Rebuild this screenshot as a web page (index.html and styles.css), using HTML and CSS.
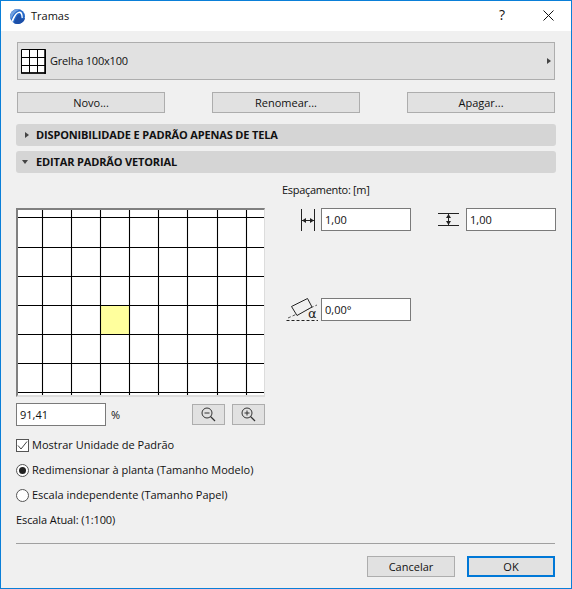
FILE: index.html
```html
<!DOCTYPE html>
<html lang="pt">
<head>
    <meta charset="UTF-8">
    <title>Tramas</title>
    <link rel="stylesheet" href="styles.css">
</head>
<body>
    <div class="window">
        <div class="titlebar">
            <svg class="app-logo" width="15" height="15" viewBox="0 0 15 15">
                <circle cx="7.500" cy="7.500" r="7.500" fill="#2468c8"/>
                <path d="M0.800 4.500 C2 1.800 4.500 0 7.500 0 C8.500 0 9.500 0.200 10.300 0.600 C6.500 1.500 3 5 1 10.500 C0.300 9.500 0 8.500 0 7.500 C0 6.500 0.300 5.500 0.800 4.500 Z" fill="#6f9fe0"/>
                <path d="M1.500 12 C3.500 6 7 2.300 10 2.500 C12 2.700 12.800 5 12.800 9 L11.600 9 C11.400 6 10.800 4.300 9.500 4 C7.500 3.700 5 7 3 13 Z" fill="#fff"/>
                <path d="M4 14 C6 8 8 5.500 9.500 5.500 C10.500 5.500 11 7 11.300 10 L15 9 C14.500 12.500 11.500 15 7.500 15 C6.200 15 5 14.600 4 14 Z" fill="#1c4fa8"/>
            </svg>
            <span class="title">Tramas</span>
            <span class="help">?</span>
            <svg class="close" width="11" height="11" viewBox="0 0 11 11">
                <path d="M0.500 0.500 L10.500 10.500 M10.500 0.500 L0.500 10.500" stroke="#111" stroke-width="1" fill="none"/>
            </svg>
        </div>

        <div class="content">
            <div class="selector">
                <svg class="swatch" width="25" height="25" viewBox="0 0 25 25">
                    <rect x="0" y="0" width="25" height="25" rx="1" fill="#fff"/>
                    <path d="M0.500 0.500 H24.500 V24 H0.500 Z M8.500 0.500 V24 M16.500 0.500 V24 M0.500 8.500 H24.500 M0.500 16.500 H24.500" stroke="#000" fill="none"/>
                    <path d="M0 24 H25 M24 0.500 V25" stroke="#000" stroke-width="1.500" fill="none"/>
                </svg>
                <span class="selector-name">Grelha 100x100</span>
                <span class="arrow-right selector-arrow"></span>
            </div>

            <div class="button-row">
                <button class="btn btn-wide">Novo...</button>
                <button class="btn btn-wide">Renomear...</button>
                <button class="btn btn-wide">Apagar...</button>
            </div>

            <div class="section section-first">
                <span class="arrow-right section-arrow"></span>
                <span class="section-text">DISPONIBILIDADE E PADRÃO APENAS DE TELA</span>
            </div>
            <div class="section section-second">
                <span class="arrow-down"></span>
                <span class="section-text">EDITAR PADRÃO VETORIAL</span>
            </div>

            <div class="edit-area">
                <div class="left-col">
                    <div class="preview">
                        <svg width="249" height="189" viewBox="0 0 249 189">
                            <rect x="85" y="98" width="28" height="28" fill="#ffff9d"/>
                            <path class="grid-line" d="M26.500 0 V189 M55.500 0 V189 M84.500 0 V189 M113.500 0 V189 M142.500 0 V189 M171.500 0 V189 M201.500 0 V189 M230.500 0 V189"/>
                            <path class="grid-line" d="M0 9.500 H249 M0 39.500 H249 M0 68.500 H249 M0 97.500 H249 M0 126.500 H249 M0 155.500 H249 M0 184.500 H249"/>
                        </svg>
                    </div>
                    <div class="zoom-row">
                        <input class="field" type="text" value="91,41">
                        <span class="unit">%</span>
                        <button class="btn btn-icon zoom-out">
                            <svg width="15" height="15" viewBox="0 0 15 15">
                                <circle cx="6" cy="6" r="5" stroke="#333" fill="none"/>
                                <path d="M3.500 6 H8.500" stroke="#333" fill="none"/>
                                <path d="M9.500 9.500 L14 14" stroke="#333" stroke-width="1.300" fill="none"/>
                            </svg>
                        </button>
                        <button class="btn btn-icon">
                            <svg width="15" height="15" viewBox="0 0 15 15">
                                <circle cx="6" cy="6" r="5" stroke="#333" fill="none"/>
                                <path d="M3.500 6 H8.500 M6 3.500 V8.500" stroke="#333" fill="none"/>
                                <path d="M9.500 9.500 L14 14" stroke="#333" stroke-width="1.300" fill="none"/>
                            </svg>
                        </button>
                    </div>
                </div>

                <div class="right-col">
                    <div class="label label-spacing">Espaçamento: [m]</div>
                    <div class="spacing-grid">
                        <svg class="icon-cell" width="15" height="22" viewBox="0 0 15 22">
                            <path d="M0.500 0 V22 M13.500 0 V22 M1 11.500 H13" stroke="#222" fill="none"/>
                            <path d="M1 11.500 L5 9 V14 Z M13 11.500 L9 9 V14 Z" fill="#222"/>
                        </svg>
                        <input class="field" type="text" value="1,00">
                        <svg class="icon-cell icon-right" width="21" height="14" viewBox="0 0 21 14">
                            <path d="M0 0.500 H21 M0 12.500 H21 M10.500 1 V12" stroke="#222" fill="none"/>
                            <path d="M10.500 1 L8 5 H13 Z M10.500 12 L8 8 H13 Z" fill="#222"/>
                        </svg>
                        <input class="field" type="text" value="1,00">
                    </div>
                    <div class="angle-row">
                        <svg class="angle-icon" width="34" height="26" viewBox="0 0 34 26">
                            <path d="M0.500 23.500 H32" stroke="#222" stroke-dasharray="3 2" fill="none"/>
                            <path d="M2 21 L31 8" stroke="#555" stroke-dasharray="3 2" fill="none"/>
                            <path d="M5.500 9.500 L21.500 1.500 L26 10 L11 18.500 Z" stroke="#222" fill="#f0f0f0"/>
                            <text class="alpha" x="22" y="21">α</text>
                        </svg>
                        <input class="field" type="text" value="0,00°">
                    </div>
                </div>
            </div>

            <div class="options">
                <label class="option">
                    <span class="checkbox">
                        <svg width="11" height="11" viewBox="0 0 11 11">
                            <path d="M1 5.500 L4 9 L10 1.500" stroke="#444" stroke-width="1" fill="none"/>
                        </svg>
                    </span>
                    <span class="option-text">Mostrar Unidade de Padrão</span>
                </label>
                <label class="option"><span class="radio radio-on"></span><span class="option-text">Redimensionar à planta (Tamanho Modelo)</span></label>
                <label class="option"><span class="radio"></span><span class="option-text">Escala independente (Tamanho Papel)</span></label>
                <div class="label label-scale">Escala Atual: (1:100)</div>
            </div>

            <div class="separator"></div>

            <div class="footer">
                <button class="btn btn-footer">Cancelar</button>
                <button class="btn btn-footer btn-default">OK</button>
            </div>
        </div>
    </div>
</body>
</html>
```

FILE: styles.css
```css
* {
    box-sizing: border-box;
}
body {
    margin: 0;
    font-family: 'Open Sans', sans-serif;
    font-size: 11px;
    color: #111;
}
.window {
    width: 572px;
    height: 589px;
    background-color: #f0f0f0;
    border: 1px solid #0a7fd8;
    overflow: hidden;
}
.titlebar {
    height: 30px;
    background-color: #fff;
    display: flex;
    align-items: center;
    padding-left: 9px;
}
.app-logo {
    margin-right: 6px;
    margin-top: 1px;
}
.title {
    font-size: 11px;
    flex: 1;
    margin-bottom: 2px;
}
.help {
    font-size: 14px;
    margin-right: 38px;
    margin-bottom: 3px;
}
.close {
    margin-right: 17px;
    margin-bottom: 2px;
}
.content {
    padding: 11px 15px 0 15px;
}
.selector {
    height: 38px;
    margin: 0 1px;
    width: 538px;
    background-color: #e1e1e1;
    border: 1px solid #adadad;
    display: flex;
    align-items: center;
    padding-left: 3px;
}
.swatch {
    margin-right: 4px;
}
.selector-name {
    flex: 1;
    letter-spacing: -0.2px;
    margin-bottom: 2px;
}
.arrow-right {
    width: 0;
    height: 0;
    border-style: solid;
    border-width: 3.5px 0 3.5px 4px;
    border-color: transparent transparent transparent #444;
}
.selector-arrow {
    margin-right: 3px;
}
.button-row {
    display: flex;
    justify-content: space-between;
    margin: 12px 1px 0 1px;
    width: 538px;
}
.btn {
    background-color: #e1e1e1;
    border: 1px solid #adadad;
    font-family: 'Open Sans', sans-serif;
    font-size: 11px;
    color: #111;
    padding: 0;
    height: 21px;
}
.btn-wide {
    width: 148px;
}
.section {
    height: 22px;
    width: 540px;
    background-color: #d5d5d5;
    border-radius: 3px;
    display: flex;
    align-items: center;
    font-weight: bold;
    font-size: 11px;
}
.section-text {
    letter-spacing: -0.15px;
    margin-bottom: 2px;
}
.section-first {
    margin-top: 11px;
    padding-left: 9px;
}
.section-second {
    margin-top: 5px;
    padding-left: 6px;
}
.section-arrow {
    margin-right: 7px;
}
.arrow-down {
    width: 0;
    height: 0;
    border-style: solid;
    border-width: 4px 3.5px 0 3.5px;
    border-color: #444 transparent transparent transparent;
    margin-right: 8px;
}
.edit-area {
    display: flex;
    gap: 17px;
    margin-top: 9px;
}
.left-col {
    width: 249px;
    padding-top: 26px;
}
.preview {
    width: 249px;
    height: 189px;
    background-color: #fff;
    border-top: 2px solid #808080;
    border-left: 2px solid #808080;
    border-right: 1px solid #dcdcdc;
    border-bottom: 2px solid #dcdcdc;
    overflow: hidden;
}
.preview svg {
    display: block;
    margin: -2px 0 0 -2px;
}
.grid-line {
    stroke: #000;
    stroke-width: 1.1;
    fill: none;
}
.zoom-row {
    display: flex;
    align-items: center;
    margin-top: 6px;
    height: 23px;
}
.field {
    width: 90px;
    height: 23px;
    background-color: #fff;
    border: 1px solid #7a7a7a;
    border-radius: 0;
    padding: 0 3px;
    font-family: 'Open Sans', sans-serif;
    font-size: 11px;
    color: #111;
    outline: none;
}
.unit {
    margin-left: 5px;
    flex: 1;
}
.btn-icon {
    width: 33px;
    display: flex;
    align-items: center;
    justify-content: center;
}
.zoom-out {
    margin-right: 7px;
}
.label {
    height: 16px;
    line-height: 16px;
}
.label-spacing {
    letter-spacing: -0.3px;
}
.label-scale {
    letter-spacing: -0.1px;
}
.spacing-grid {
    display: grid;
    grid-template-columns: 39px 90px 55px 90px;
    align-items: center;
    margin-top: 10px;
}
.icon-cell {
    justify-self: end;
    margin-right: 5px;
}
.icon-right {
    margin-right: 7px;
}
.angle-row {
    display: flex;
    align-items: center;
    margin-top: 67px;
    height: 23px;
}
.angle-icon {
    margin-left: 4px;
    margin-right: 1px;
    flex: none;
}
.alpha {
    font-family: 'DejaVu Sans', sans-serif;
    font-size: 13px;
    fill: #222;
}
.options {
    display: flex;
    flex-direction: column;
    gap: 9px;
    margin-top: 11px;
}
.option {
    display: flex;
    align-items: center;
    height: 16px;
}
.option-text {
    margin-bottom: 2px;
}
.checkbox {
    width: 13px;
    height: 13px;
    background-color: #fff;
    border: 1px solid #555;
    margin-right: 3px;
    display: flex;
    align-items: center;
    justify-content: center;
}
.radio {
    width: 13px;
    height: 13px;
    border-radius: 50%;
    background-color: #fff;
    border: 1px solid #555;
    margin-right: 3px;
    display: flex;
    align-items: center;
    justify-content: center;
}
.radio-on::after {
    content: "";
    width: 7px;
    height: 7px;
    border-radius: 50%;
    background-color: #222;
}
.separator {
    height: 1px;
    width: 539px;
    background-color: #a0a0a0;
    margin-top: 15px;
}
.footer {
    display: flex;
    justify-content: flex-end;
    gap: 12px;
    width: 539px;
    margin-top: 12px;
}
.btn-footer {
    width: 88px;
}
.btn-default {
    border: 2px solid #0078d7;
}
```
